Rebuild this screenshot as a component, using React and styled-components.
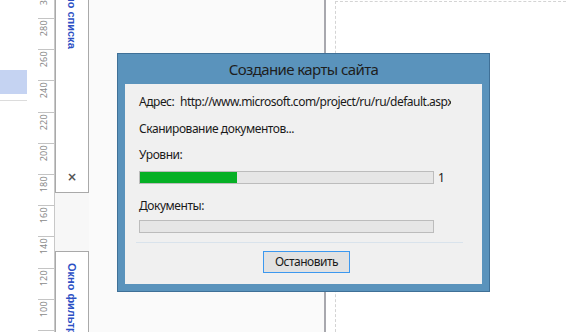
import React from "react";
import styled, { createGlobalStyle } from "styled-components";

const Global = createGlobalStyle`
  html, body { margin: 0; padding: 0; }
  body { width: 566px; height: 332px; overflow: hidden; background: #fff;
    font-family: "Noto Sans", "Open Sans", sans-serif; }
  #root { width: 566px; height: 332px; }
`;

const Screen = styled.div`
  position: relative;
  display: flex;
  width: 566px;
  height: 332px;
  overflow: hidden;
`;

const LeftStrip = styled.div`
  width: 27px;
  flex: none;
  background: #fff;
  padding-top: 70px;
  box-sizing: border-box;
`;

const Highlight = styled.div`
  height: 24px;
  background: #c5d3f2;
`;

const StripLine = styled.div`
  margin-top: 6px;
  height: 1px;
  background: #dcdcdc;
`;

const Ruler = styled.div`
  width: 28px;
  flex: none;
  background: #fff;
  border-right: 1px solid #c8c8c8;
  box-sizing: border-box;
  overflow: hidden;
`;

const RulerTrack = styled.div`
  margin-top: -13.2px;
  display: flex;
  flex-direction: column;
`;

const RulerCell = styled.div`
  position: relative;
  height: 31.2px;
  flex: none;
  padding: 2px 0 0 12px;
  box-sizing: border-box;
  &::before {
    content: "";
    position: absolute;
    right: 0;
    top: 0;
    width: 16px;
    height: 1px;
    background: #c4c4c4;
  }
`;

const RulerLabel = styled.span`
  display: block;
  writing-mode: vertical-rl;
  transform: rotate(180deg);
  font-family: "Noto Sans", sans-serif;
  font-size: 9px;
  line-height: 9px;
  color: #8a8a8a;
  letter-spacing: 0.3px;
`;

const PanelColumn = styled.div`
  width: 34px;
  flex: none;
  display: flex;
  flex-direction: column;
  background: #f7f7f7;
`;

const DockBox = styled.div`
  box-sizing: border-box;
  flex: none;
  background: #fff;
  border: 1px solid #a9a9a9;
  border-top: ${(p) => (p.$top ? "none" : "1px solid #a9a9a9")};
  border-bottom: ${(p) => (p.$top ? "1px solid #a9a9a9" : "none")};
  height: ${(p) => p.$h}px;
  margin-top: ${(p) => p.$mt || 0}px;
  display: flex;
  flex-direction: column;
  align-items: center;
  overflow: hidden;
`;

const DockTitle = styled.span`
  writing-mode: vertical-rl;
  font-family: "Liberation Sans", sans-serif;
  font-weight: bold;
  font-size: 11px;
  line-height: 12px;
  color: #2c50c4;
  margin-top: ${(p) => p.$mt}px;
  white-space: nowrap;
`;

const DockClose = styled.span`
  margin-top: auto;
  margin-bottom: 9px;
  font-family: "DejaVu Sans", sans-serif;
  font-weight: bold;
  font-size: 12px;
  line-height: 12px;
  color: #555;
`;

const Canvas = styled.div`
  width: 235px;
  flex: none;
  background: #fafafa;
`;

const Splitter = styled.div`
  width: 2px;
  flex: none;
  background: #a8a8ae;
`;

const PageArea = styled.div`
  flex: 1;
  background: #fff;
  padding: 1px 0 0 9px;
  box-sizing: border-box;
  display: flex;
`;

const Page = styled.div`
  flex: 1;
  border-left: 1px dashed #d4d4d4;
  border-top: 1px dashed #d4d4d4;
`;

/* ---- dialog ---- */

const Dialog = styled.div`
  position: absolute;
  left: 117px;
  top: 53px;
  width: 373px;
  height: 239px;
  box-sizing: border-box;
  background: #5a93bc;
  border: 1px solid #3f7097;
  display: flex;
  flex-direction: column;
  padding: 0 7px 7px 7px;
`;

const TitleBar = styled.div`
  height: 30px;
  flex: none;
  display: flex;
  align-items: center;
  justify-content: center;
  font-family: "Noto Sans", sans-serif;
  font-size: 15px;
  letter-spacing: -0.6px;
  color: #1e1e1e;
  padding-bottom: 1px;
  box-sizing: border-box;
`;

const Body = styled.div`
  flex: 1;
  background: #f0f0f0;
  padding: 10px 0 0 14px;
  display: flex;
  flex-direction: column;
  font-family: "Noto Sans", sans-serif;
  font-size: 12px;
  line-height: 16px;
  letter-spacing: -0.45px;
  color: #1a1a1a;
  overflow: hidden;
`;

const Line = styled.div`
  display: flex;
  margin-top: ${(p) => p.$mt || 0}px;
  white-space: nowrap;
`;

const FieldLabel = styled.span`
  width: 41px;
  flex: none;
`;

const Url = styled.span`
  width: 271px;
  overflow: hidden;
  letter-spacing: -0.5px;
`;

const BarRow = styled.div`
  display: flex;
  align-items: center;
  margin-top: ${(p) => p.$mt}px;
`;

const Bar = styled.div`
  width: 295px;
  height: 13px;
  box-sizing: border-box;
  background: #e6e6e6;
  border: 1px solid #bcbcbc;
  display: flex;
`;

const Fill = styled.div`
  background: #06b025;
  height: 100%;
`;

const BarValue = styled.span`
  margin-left: 4px;
  font-size: 12px;
  line-height: 13px;
`;

const Separator = styled.div`
  margin: 9px 0 0 -3px;
  width: 327px;
  height: 1px;
  background: #d9e3ec;
`;

const ButtonRow = styled.div`
  display: flex;
  margin-top: 8px;
  padding-left: 124px;
`;

const Button = styled.button`
  width: 87px;
  height: 22px;
  box-sizing: border-box;
  background: #e2e2e2;
  border: 1px solid #3c98ef;
  font-family: "Noto Sans", sans-serif;
  font-size: 12px;
  letter-spacing: -0.5px;
  color: #1a1a1a;
  padding: 0;
  line-height: 18px;
`;

const rulerLabels = ["300", "280", "260", "240", "220", "200", "180", "160", "140", "120", "100", "80"];

export default function App() {
  return (
    <>
      <Global />
      <Screen>
        <LeftStrip>
          <Highlight />
          <StripLine />
        </LeftStrip>
        <Ruler>
          <RulerTrack>
            {rulerLabels.map((l) => (
              <RulerCell key={l}>
                <RulerLabel>{l}</RulerLabel>
              </RulerCell>
            ))}
          </RulerTrack>
        </Ruler>
        <PanelColumn>
          <DockBox $top $h={193}>
            <DockTitle $mt={-19}>Окно списка</DockTitle>
            <DockClose>×</DockClose>
          </DockBox>
          <DockBox $h={90} $mt={58}>
            <DockTitle $mt={11}>Окно фильтра</DockTitle>
          </DockBox>
        </PanelColumn>
        <Canvas />
        <Splitter />
        <PageArea>
          <Page />
        </PageArea>

        <Dialog>
          <TitleBar>Создание карты сайта</TitleBar>
          <Body>
            <Line>
              <FieldLabel>Адрес:</FieldLabel>
              <Url>http://www.microsoft.com/project/ru/ru/default.aspx</Url>
            </Line>
            <Line $mt={11}>Сканирование документов...</Line>
            <Line $mt={10}>Уровни:</Line>
            <BarRow $mt={8}>
              <Bar>
                <Fill style={{ width: "33%" }} />
              </Bar>
              <BarValue>1</BarValue>
            </BarRow>
            <Line $mt={14}>Документы:</Line>
            <BarRow $mt={6}>
              <Bar />
            </BarRow>
            <Separator />
            <ButtonRow>
              <Button>Остановить</Button>
            </ButtonRow>
          </Body>
        </Dialog>
      </Screen>
    </>
  );
}
